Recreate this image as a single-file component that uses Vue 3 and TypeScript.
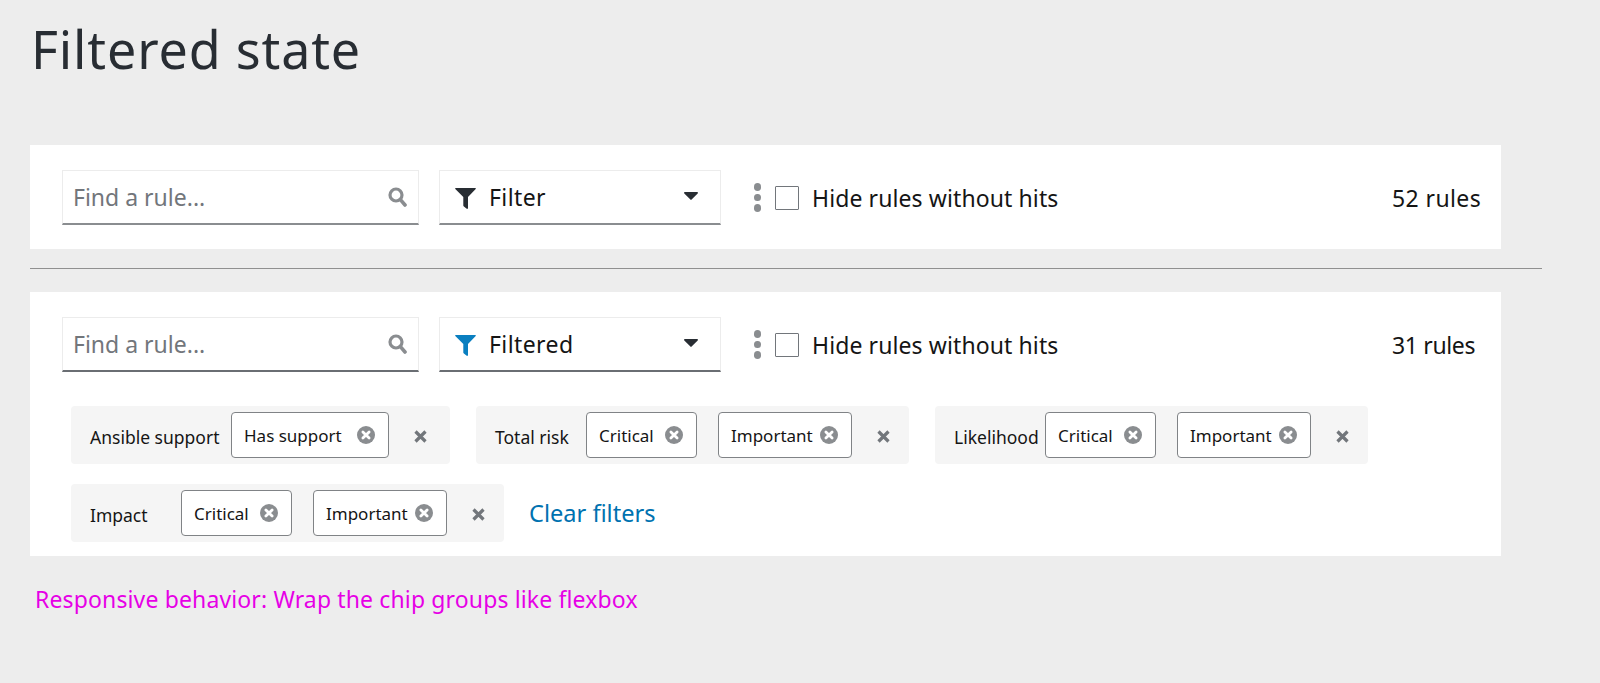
<script setup lang="ts">
interface Chip { text: string; width: number }
interface Group { label: string; labelWidth: number; chips: Chip[] }

const groups: Group[] = [
  { label: 'Ansible support', labelWidth: 141, chips: [{ text: 'Has support', width: 158 }] },
  { label: 'Total risk', labelWidth: 91, chips: [{ text: 'Critical', width: 111 }, { text: 'Important', width: 134 }] },
  { label: 'Likelihood', labelWidth: 91, chips: [{ text: 'Critical', width: 111 }, { text: 'Important', width: 134 }] },
  { label: 'Impact', labelWidth: 91, chips: [{ text: 'Critical', width: 111 }, { text: 'Important', width: 134 }] },
]

const toolbars = [
  { name: 'Filter', count: '52 rules', active: false },
  { name: 'Filtered', count: '31 rules', active: true },
]
</script>

<template>
  <main class="page">
    <h1 class="title">Filtered state</h1>

    <template v-for="(bar, i) in toolbars" :key="bar.name">
      <hr v-if="i === 1" class="divider" />
      <section class="panel" :class="{ first: i === 0 }">
        <div class="toolbar">
          <div class="field search" :class="{ dark: bar.active }">
            <span class="placeholder">Find a rule...</span>
            <svg class="search-icon" viewBox="0 0 19 20" width="19" height="20">
              <circle cx="8" cy="8" r="6" fill="none" stroke="#8a8d90" stroke-width="3.2" />
              <path d="M12.4 12.6 L17 18" stroke="#8a8d90" stroke-width="3.6" stroke-linecap="round" />
            </svg>
          </div>
          <div class="field select" :class="{ dark: bar.active }">
            <svg class="funnel" :class="{ blue: bar.active }" viewBox="0 0 21 21" width="21" height="21">
              <path d="M.8 0H20.2c.6 0 .9.7.5 1.1L13 9V20c0 .7-.7 1.2-1.3.8L8.9 18.6c-.4-.2-.6-.5-.6-1V9L.3 1.1C-.1.7.2 0 .8 0z" />
            </svg>
            <span class="select-text">{{ bar.name }}</span>
            <svg class="caret" viewBox="0 0 14 8" width="14" height="8">
              <path d="M.9 0H13.1c.8 0 1.2.9.6 1.5L7.6 7.6c-.3.4-.9.4-1.2 0L.3 1.5C-.3.9.1 0 .9 0z" />
            </svg>
          </div>
          <div class="kebab"><i></i><i></i><i></i></div>
          <span class="checkbox"></span>
          <span class="check-label">Hide rules without hits</span>
          <span class="count" :class="{ narrow: bar.active }">{{ bar.count }}</span>
        </div>

        <div v-if="bar.active" class="chips">
          <div v-for="g in groups" :key="g.label" class="group" :class="{ single: g.chips.length === 1 }">
            <span class="group-label" :style="{ width: g.labelWidth + 'px' }">{{ g.label }}</span>
            <div class="group-chips">
              <span v-for="c in g.chips" :key="c.text" class="chip" :style="{ width: c.width + 'px' }">
                <span>{{ c.text }}</span>
                <svg class="chip-close" viewBox="0 0 18 18" width="18" height="18">
                  <circle cx="9" cy="9" r="9" fill="#8a8d90" />
                  <path d="M5.9 5.9 12.1 12.1M12.1 5.9 5.9 12.1" stroke="#fff" stroke-width="2.8" stroke-linecap="round" />
                </svg>
              </span>
            </div>
            <svg class="group-close" viewBox="0 0 13 13" width="13" height="13">
              <path d="M1.5 1.5 11.5 11.5M11.5 1.5 1.5 11.5" stroke="#72767b" stroke-width="3.2" />
            </svg>
          </div>
          <a class="clear">Clear filters</a>
        </div>
      </section>
    </template>

    <p class="note">Responsive behavior: Wrap the chip groups like flexbox</p>
  </main>
</template>

<style>
html, body { margin: 0; background: #ededed; }
</style>

<style scoped>
.page {
  box-sizing: border-box;
  height: 683px;
  padding-left: 30px;
  overflow: hidden;
  background: #ededed;
  font-family: "Noto Sans", "Open Sans", sans-serif;
  color: #151515;
}
.title {
  margin: 0;
  padding: 12px 0 0 1px;
  height: 145px;
  box-sizing: border-box;
  font-size: 52px;
  line-height: 74px;
  font-weight: 400;
  letter-spacing: 0.85px;
  color: #282d33;
}
.divider {
  width: 1512px;
  height: 1px;
  margin: 19px 0 23px;
  border: 0;
  background: #909090;
}
.panel {
  width: 1471px;
  background: #fff;
  padding: 25px 0 14px;
  box-sizing: border-box;
}
.panel.first { padding-bottom: 24px; }
.toolbar {
  display: flex;
  align-items: center;
  padding-left: 32px;
  height: 55px;
}
.field {
  box-sizing: border-box;
  height: 55px;
  display: flex;
  align-items: center;
  background: #fff;
  border: 1px solid #ececec;
  border-bottom: 2px solid #8a8d90;
}
.field.dark { border-bottom-color: #6a6e73; }
.search {
  width: 357px;
  padding: 0 11px 0 10px;
  justify-content: space-between;
}
.placeholder {
  font-size: 23px;
  color: #72767b;
}
.select {
  width: 282px;
  margin-left: 20px;
  padding: 0 9px 0 15px;
}
.funnel { fill: #282d33; margin-top: 3px; }
.funnel.blue { fill: #0a7fc0; }
.select-text {
  margin-left: 13px;
  font-size: 23px;
  letter-spacing: 0.4px;
  flex: 1;
}
.caret { fill: #282d33; margin-top: -3px; margin-right: 13px; }
.kebab {
  display: flex;
  flex-direction: column;
  gap: 3px;
  margin-left: 33px;
}
.kebab i {
  display: block;
  width: 7px;
  height: 7.5px;
  border-radius: 50%;
  background: #8a8d90;
}
.checkbox {
  box-sizing: border-box;
  width: 24px;
  height: 24px;
  margin-left: 14px;
  border: 1px solid #72767b;
  border-radius: 1px;
}
.check-label {
  margin-left: 13px;
  font-size: 23px;
  letter-spacing: 0.1px;
}
.count {
  margin-left: auto;
  width: 109px;
  font-size: 23px;
  letter-spacing: 0.4px;
}
.count.narrow { letter-spacing: -0.35px; }
.chips {
  display: flex;
  flex-wrap: wrap;
  align-items: center;
  gap: 20px 26px;
  margin-top: 34px;
  padding-left: 41px;
}
.group {
  display: flex;
  align-items: center;
  height: 58px;
  padding: 0 15px 0 19px;
  box-sizing: border-box;
  background: #f5f5f5;
  border-radius: 4px;
}
.group.single { padding-right: 19px; }
.group-label {
  font-size: 17.5px;
  padding-top: 4px;
  white-space: nowrap;
}
.group-chips {
  display: flex;
  gap: 21px;
}
.chip {
  box-sizing: border-box;
  height: 46px;
  display: flex;
  align-items: center;
  justify-content: space-between;
  padding: 0 13px 0 12px;
  background: #fff;
  border: 1px solid #808386;
  border-radius: 4px;
  font-size: 17px;
  white-space: nowrap;
}
.group-close { margin-left: 25px; margin-right: 4px; margin-top: 2px; }
.clear {
  margin-left: -1px;
  font-size: 23.6px;
  color: #0072b0;
}
.note {
  margin: 27px 0 0 5px;
  font-size: 23px;
  letter-spacing: 0.135px;
  color: #e600e6;
}
</style>
